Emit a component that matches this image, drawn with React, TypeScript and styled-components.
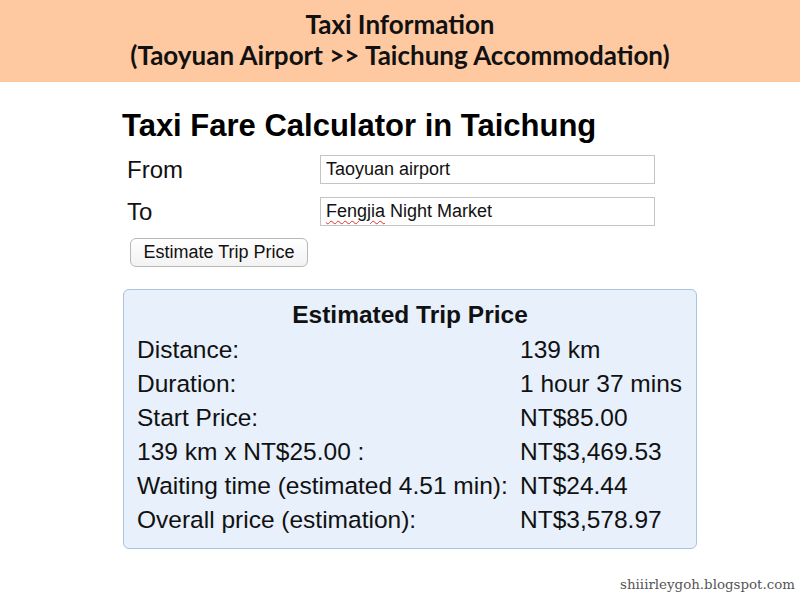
import React from "react";
import styled, { createGlobalStyle } from "styled-components";

const GlobalStyle = createGlobalStyle`
  html, body {
    margin: 0;
    padding: 0;
    background: #ffffff;
  }
  body {
    width: 800px;
    height: 600px;
    overflow: hidden;
    font-family: "Liberation Sans", Arial, sans-serif;
    color: #111111;
  }
`;

const rows = [
  { label: "Distance:", value: "139 km" },
  { label: "Duration:", value: "1 hour 37 mins" },
  { label: "Start Price:", value: "NT$85.00" },
  { label: "139 km x NT$25.00 :", value: "NT$3,469.53" },
  { label: "Waiting time (estimated 4.51 min):", value: "NT$24.44" },
  { label: "Overall price (estimation):", value: "NT$3,578.97" },
];

const App: React.FC = () => {
  return (
    <>
      <GlobalStyle />
      <Page>
        <Banner>
          <BannerLine>Taxi Information</BannerLine>
          <BannerLine>(Taoyuan Airport &gt;&gt; Taichung Accommodation)</BannerLine>
        </Banner>
        <Content>
          <Heading>Taxi Fare Calculator in Taichung</Heading>
          <Form>
            <FieldRow>
              <FieldLabel>From</FieldLabel>
              <TextInput defaultValue="Taoyuan airport" spellCheck={false} />
            </FieldRow>
            <FieldRow>
              <FieldLabel>To</FieldLabel>
              <InputBox>
                <Misspelled>Fengjia</Misspelled> Night Market
              </InputBox>
            </FieldRow>
            <EstimateButton type="button">Estimate Trip Price</EstimateButton>
          </Form>
          <ResultBox>
            <ResultTitle>Estimated Trip Price</ResultTitle>
            <ResultGrid>
              {rows.map((r) => (
                <React.Fragment key={r.label}>
                  <Cell>{r.label}</Cell>
                  <Cell>{r.value}</Cell>
                </React.Fragment>
              ))}
            </ResultGrid>
          </ResultBox>
        </Content>
        <Footer>shiiirleygoh.blogspot.com</Footer>
      </Page>
    </>
  );
};

const Page = styled.div`
  width: 800px;
  height: 600px;
  display: flex;
  flex-direction: column;
`;

const Banner = styled.header`
  height: 82px;
  background: #fec8a0;
  display: flex;
  flex-direction: column;
  align-items: center;
  justify-content: center;
  padding-bottom: 2px;
  box-sizing: border-box;
`;

const BannerLine = styled.div`
  font-family: Lato, "Open Sans", sans-serif;
  font-weight: 700;
  font-size: 26px;
  line-height: 31px;
  color: #111111;
`;

const Content = styled.main`
  flex: 1;
  padding: 24px 0 0 122px;
  display: flex;
  flex-direction: column;
`;

const Heading = styled.h1`
  margin: 0;
  font-size: 31px;
  font-weight: 700;
  line-height: 40px;
  color: #000000;
`;

const Form = styled.div`
  display: flex;
  flex-direction: column;
  gap: 13px;
  padding: 9px 0 0 5px;
`;

const FieldRow = styled.div`
  display: flex;
  align-items: center;
`;

const FieldLabel = styled.label`
  width: 193px;
  font-size: 24px;
  color: #111111;
`;

const TextInput = styled.input`
  width: 335px;
  height: 29px;
  box-sizing: border-box;
  border: 1.5px solid #c4c4c4;
  padding: 0 5px;
  font-family: "Liberation Sans", Arial, sans-serif;
  font-size: 18px;
  color: #111111;
  background: #ffffff;
  outline: none;
`;

const InputBox = styled.div`
  width: 335px;
  height: 29px;
  box-sizing: border-box;
  border: 1.5px solid #c4c4c4;
  padding: 0 5px;
  display: flex;
  align-items: center;
  white-space: pre;
  font-size: 18px;
  color: #111111;
`;

const Misspelled = styled.span`
  text-decoration: underline wavy #e03030;
  text-underline-offset: 3px;
  text-decoration-thickness: 1px;
`;

const EstimateButton = styled.button`
  align-self: flex-start;
  margin-left: 3px;
  margin-top: -1px;
  height: 29px;
  padding: 0 12.5px;
  border: 1px solid #b8b8b8;
  border-radius: 6px;
  background: linear-gradient(#ffffff, #f2f2f2);
  font-family: "Liberation Sans", Arial, sans-serif;
  font-size: 18px;
  color: #111111;
`;

const ResultBox = styled.section`
  margin-top: 22px;
  margin-left: 1px;
  width: 574px;
  height: 260px;
  box-sizing: border-box;
  background: #e7f0fb;
  border: 1.5px solid #a9c3e3;
  border-radius: 6px;
  padding: 10px 0 0 13px;
`;

const ResultTitle = styled.h2`
  margin: 0 0 3px -13px;
  text-align: center;
  font-size: 24.5px;
  font-weight: 700;
  line-height: 30px;
  color: #111111;
`;

const ResultGrid = styled.div`
  display: grid;
  grid-template-columns: 383px auto;
  grid-auto-rows: 34px;
  align-items: center;
`;

const Cell = styled.div`
  font-size: 24.5px;
  white-space: nowrap;
  color: #111111;
`;

const Footer = styled.footer`
  align-self: flex-end;
  padding: 0 5px 8px 0;
  font-family: "DejaVu Serif", "Liberation Serif", serif;
  font-size: 13.4px;
  color: #555555;
`;

export default App;
